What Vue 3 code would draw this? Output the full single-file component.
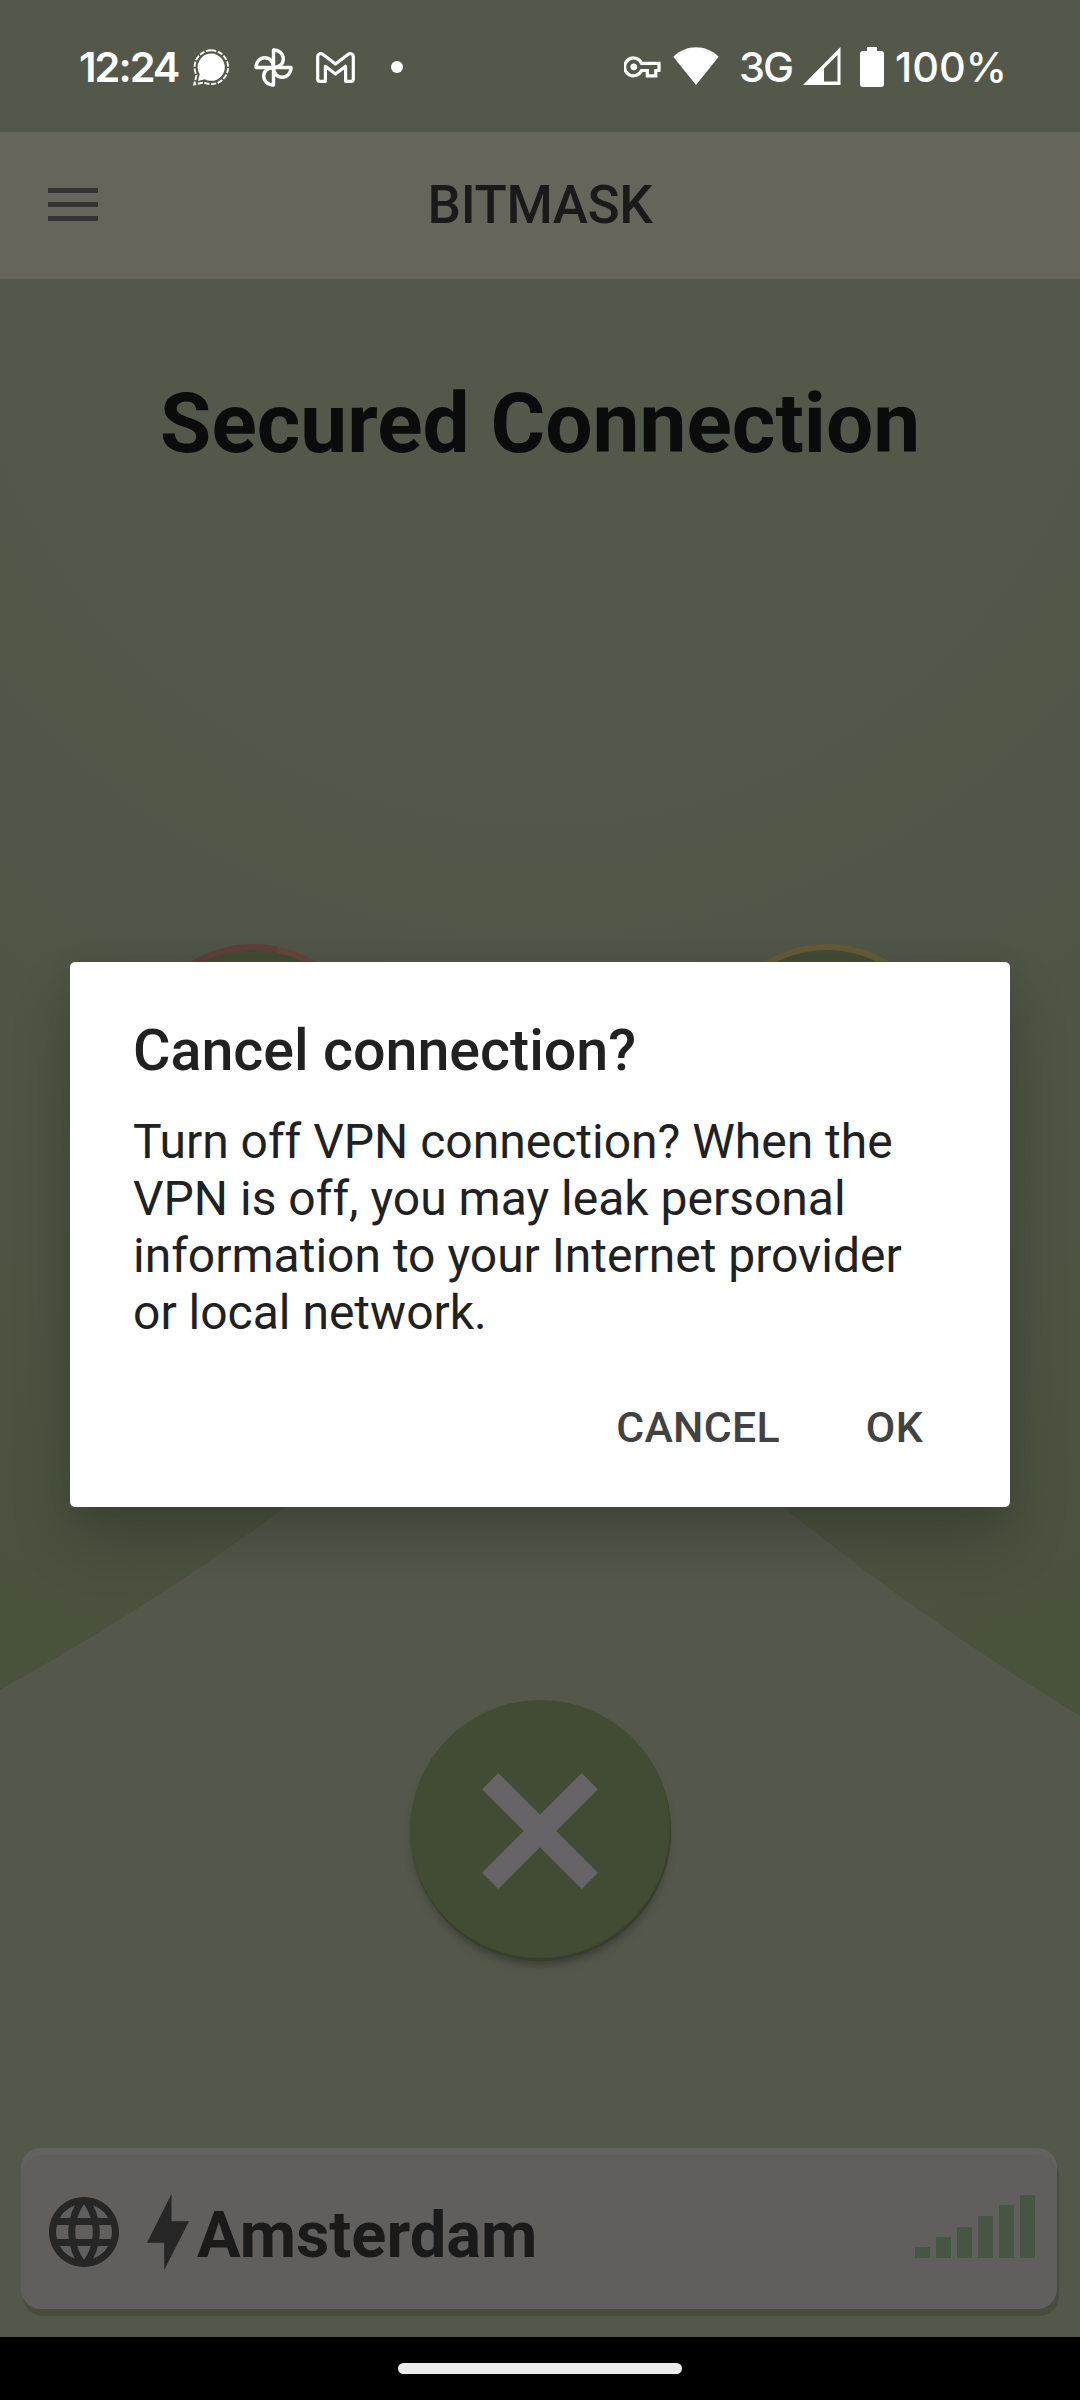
<script setup>
const location = 'Amsterdam'
const signalBars = [11, 21, 31, 42, 53, 63]
</script>

<template>
  <div class="screen">
    <header class="status">
      <span class="clock">12:24</span>
      <svg class="ic-signal" width="36" height="37" viewBox="0 0 36 37">
        <path d="M18.2 4.6a13.6 13.6 0 1 1-6.4 25.6L4.9 31.9l1.8-6.6A13.6 13.6 0 0 1 18.2 4.6z" fill="#fff" />
        <path d="M18.2 1.3a16.9 16.9 0 1 1-7.4 32.1L1.2 35.6l2.3-9.5A16.9 16.9 0 0 1 18.2 1.3z" fill="none" stroke="#fff" stroke-width="1.9" stroke-dasharray="5.2 1.6" />
      </svg>
      <svg class="ic-photos" width="39" height="39" viewBox="0 0 39 39" fill="none" stroke="#fff" stroke-width="3.4" stroke-linejoin="round">
        <path d="M19.5 19.5V2c6 0 9.8 4.2 9.8 8.9S25.5 19.5 19.5 19.5z" />
        <path d="M19.5 19.5H37c0 6-4.2 9.8-8.9 9.8S19.5 25.5 19.5 19.5z" />
        <path d="M19.5 19.5V37c-6 0-9.8-4.2-9.8-8.9S13.5 19.5 19.5 19.5z" />
        <path d="M19.5 19.5H2c0-6 4.2-9.8 8.9-9.8S19.5 13.5 19.5 19.5z" />
      </svg>
      <svg class="ic-mail" width="39" height="31" viewBox="0 0 39 31" fill="none" stroke="#fff" stroke-width="3.2" stroke-linejoin="round">
        <path d="M1.7 4.5V27q0 2.300 2.300 2.300h5.400V14.300l10.100 7.700 10.100-7.700v15H35q2.300 0 2.300-2.300V4.500c0-2.600-3-3.700-5-2.200L19.500 12 6.700 2.300C4.700.8 1.700 1.900 1.700 4.500z" />
      </svg>
      <span class="dot"></span>
      <span class="spring"></span>
      <svg class="ic-key" width="37" height="22" viewBox="0 0 37 22" fill="none" stroke="#fff" stroke-width="3.2">
        <path d="M17.600 7.300H35v7.200h-3.200v5.300h-8.500v-5.300h-5.700A8.900 8.900 0 1 1 17.600 7.300z" />
        <circle cx="9.800" cy="10.900" r="3" fill="#fff" stroke-width="1" />
      </svg>
      <svg class="ic-wifi" width="46" height="38" viewBox="0 0 46 38">
        <path d="M.3 9.800C13-2.900 33-2.900 45.700 9.800L23 38z" fill="#fff" />
      </svg>
      <span class="net">3G</span>
      <svg class="ic-cell" width="38" height="38" viewBox="0 0 38 38">
        <path fill-rule="evenodd" d="M37.500 0v38H0zM34.500 8L21 21.600V34.500h13.500z" fill="#fff" />
      </svg>
      <svg class="ic-battery" width="24" height="40" viewBox="0 0 24 40">
        <path d="M7 0h10v4h4q3 0 3 3v30q0 3-3 3H3q-3 0-3-3V7q0-3 3-3h4z" fill="#fff" />
      </svg>
      <span class="percent">100%</span>
    </header>

    <nav class="toolbar">
      <div class="menu"><i></i><i></i><i></i></div>
      <h1>BITMASK</h1>
    </nav>

    <main class="content">
      <svg class="backdrop" width="1080" height="1500" viewBox="0 279 1080 1500">
        <defs>
          <radialGradient id="rays" gradientUnits="userSpaceOnUse" cx="540" cy="245" r="1550">
            <stop offset="0" stop-color="#54584a" />
            <stop offset=".34" stop-color="#54584a" />
            <stop offset=".5" stop-color="#505647" />
            <stop offset="1" stop-color="#49523d" />
          </radialGradient>
        </defs>
        <path d="M0 279H1080V1716Q925 1622 783 1507H286Q150 1607 0 1690z" fill="url(#rays)" />
        <g stroke-width="6">
          <circle cx="253" cy="1062" r="115" fill="#434b34" stroke="#5f3f3c" />
          <path d="M277 949.500A115 115 0 0 1 368 1062" fill="none" stroke="#66453b" />
          <circle cx="827" cy="1062" r="115" fill="#434b34" stroke="#655a37" />
        </g>
      </svg>
      <h2>Secured Connection</h2>
      <div class="fab">
        <svg width="116" height="116" viewBox="0 0 116 116" stroke="#666466" stroke-width="23">
          <path d="M8.200 8.200l99.600 99.600M107.800 8.200L8.200 107.800" />
        </svg>
      </div>
      <div class="card">
        <svg class="globe" width="84" height="84" viewBox="0 0 24 24" fill="#262626">
          <path d="M11.990 2C6.470 2 2 6.480 2 12s4.470 10 9.990 10C17.520 22 22 17.520 22 12S17.520 2 11.990 2zm6.930 6h-2.950c-.32-1.250-.78-2.450-1.380-3.560 1.840.63 3.370 1.910 4.330 3.560zM12 4.040c.83 1.200 1.480 2.530 1.910 3.960h-3.820c.43-1.430 1.080-2.760 1.910-3.960zM4.260 14C4.100 13.360 4 12.690 4 12s.1-1.360.26-2h3.380c-.08.660-.14 1.320-.14 2s.06 1.340.14 2H4.260zm.82 2h2.950c.32 1.250.78 2.450 1.380 3.560-1.840-.63-3.370-1.900-4.330-3.560zm2.950-8H5.080c.96-1.660 2.490-2.930 4.330-3.560C8.810 5.550 8.350 6.750 8.030 8zM12 19.960c-.83-1.200-1.480-2.530-1.910-3.960h3.820c-.43 1.430-1.080 2.760-1.910 3.960zM14.340 14H9.660c-.09-.66-.16-1.320-.16-2s.07-1.350.16-2h4.680c.09.65.16 1.320.16 2s-.07 1.340-.16 2zm.25 5.560c.6-1.110 1.060-2.310 1.380-3.560h2.950c-.96 1.650-2.490 2.930-4.330 3.560zM16.360 14c.08-.66.14-1.320.14-2s-.06-1.340-.14-2h3.380c.16.640.26 1.310.26 2s-.1 1.360-.26 2h-3.380z" />
        </svg>
        <svg class="bolt" width="42" height="76" viewBox="0 0 42 76">
          <path d="M24.500 0v27.300H42L17.200 76V48.700H0z" fill="#262626" />
        </svg>
        <span class="place">{{ location }}</span>
        <div class="bars">
          <i v-for="h in signalBars" :key="h" :style="{ height: h + 'px' }"></i>
        </div>
      </div>
    </main>

    <footer class="navbar"><span></span></footer>

    <section class="dialog" role="dialog">
      <h3>Cancel connection?</h3>
      <p>Turn off VPN connection? When the VPN is off, you may leak personal information to your Internet provider or local network.</p>
      <div class="actions"><button>CANCEL</button><button>OK</button></div>
    </section>
  </div>
</template>

<style>
body { margin: 0; background: #54584a; }
</style>

<style scoped>
.screen {
  position: relative;
  width: 1080px;
  height: 2400px;
  display: flex;
  flex-direction: column;
  overflow: hidden;
  background: #54584a;
  font-family: Roboto, sans-serif;
}
h1, h2, h3, p { margin: 0; }
svg { display: block; flex: none; }

.status {
  height: 132px;
  box-sizing: border-box;
  flex: none;
  display: flex;
  align-items: center;
  padding: 2px 75px 0 79px;
  color: #fff;
  font: 500 41.5px/50px Inter, Roboto, sans-serif;
  white-space: nowrap;
}
.clock { width: 114px; letter-spacing: -2px; font-weight: 600; }
.ic-photos { margin-left: 25px; }
.ic-mail { margin-left: 23px; }
.dot { width: 12px; height: 12px; border-radius: 50%; background: #fff; margin-left: 36px; }
.spring { flex: 1; }
.ic-key { margin-right: 12px; }
.ic-wifi { margin: 0 20px 3px 0; }
.net { width: 64px; letter-spacing: -2px; }
.ic-cell { margin: 0 19px 2px 0; }
.ic-battery { margin: 0 11px 1px 0; }
.percent { width: 110px; letter-spacing: 0; }

.toolbar {
  position: relative;
  height: 147px;
  flex: none;
  display: flex;
  align-items: center;
  justify-content: center;
  background: #66655c;
}
.menu {
  position: absolute;
  left: 48px;
  top: 56px;
  width: 50px;
  display: flex;
  flex-direction: column;
  gap: 9px;
}
.menu i { height: 5px; background: #343434; }
.toolbar h1 {
  font-size: 53px;
  font-weight: 500;
  line-height: 62px;
  letter-spacing: -.4px;
  color: #1a1a1a;
  padding-bottom: 2px;
}

.content {
  position: relative;
  flex: 1;
  display: flex;
  flex-direction: column;
  align-items: center;
}
.backdrop { position: absolute; left: 0; top: 0; }
.content h2 {
  position: relative;
  margin-top: 94px;
  font-size: 83.8px;
  line-height: 100px;
  font-weight: 700;
  color: #0b0b0b;
  white-space: nowrap;
}
.fab {
  position: relative;
  margin-top: 1227px;
  width: 261px;
  height: 261px;
  box-sizing: border-box;
  border-radius: 50%;
  display: flex;
  align-items: center;
  justify-content: center;
  background: #424c34;
  box-shadow: inset -1px -3px 1px #363f2b, 0 7px 8px -3px rgba(35, 35, 35, .5);
}
.card {
  position: relative;
  margin-top: 187px;
  margin-right: 2px;
  width: 1036px;
  height: 161px;
  box-sizing: border-box;
  padding: 0 22px 0 21px;
  border-radius: 20px;
  display: flex;
  align-items: center;
  background: #605f5d;
  box-shadow: inset 0 7px 0 #626260, 2px 7px 0 #484c3f;
}
.globe { margin-top: 6px; }
.bolt { margin: 7px 0 0 21px; }
.place {
  margin: 12px 0 0 8px;
  font-size: 65px;
  line-height: 76px;
  font-weight: 700;
  color: #1a1a1a;
}
.bars { margin: 0 0 4px auto; height: 63px; display: flex; align-items: flex-end; gap: 6px; }
.bars i { width: 15px; background: #475543; }

.navbar {
  height: 63px;
  flex: none;
  display: flex;
  align-items: center;
  justify-content: center;
  background: #000;
}
.navbar span { width: 284px; height: 11px; border-radius: 6px; background: #ebebeb; }

.dialog {
  position: absolute;
  left: 70px;
  top: 962px;
  width: 940px;
  height: 545px;
  box-sizing: border-box;
  padding: 55px 63px 0;
  border-radius: 5px;
  background: #fff;
  color: #212121;
  box-shadow: 0 34px 60px rgba(0, 0, 0, .2), 0 2px 30px rgba(0, 0, 0, .06);
}
.dialog h3 { font-size: 57.4px; line-height: 68px; font-weight: 500; }
.dialog p { margin-top: 28px; font-size: 48px; line-height: 57px; }
.actions {
  margin-top: 61px;
  padding-right: 24px;
  display: flex;
  justify-content: flex-end;
  gap: 86px;
}
.actions button {
  padding: 0;
  border: 0;
  background: none;
  font: 500 42.8px/50px Roboto, sans-serif;
  letter-spacing: .3px;
  color: #424242;
}
</style>
